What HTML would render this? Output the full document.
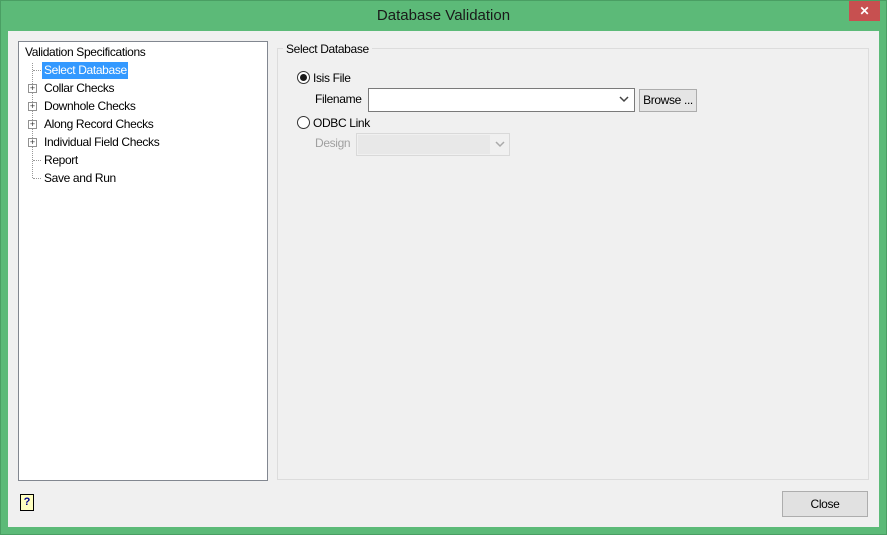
<!DOCTYPE html>
<html><head><style>
*{margin:0;padding:0;box-sizing:border-box}
body{width:887px;height:535px;background:#5cba78;font-family:"Liberation Sans",sans-serif;font-size:12px;color:#000;position:relative;overflow:hidden}
.a{position:absolute}
.t{font-size:12px;white-space:nowrap;letter-spacing:-0.35px}
</style></head><body>
<div class="a" style="left:0;top:0;width:887px;height:535px;border:1px solid #4a9e63"></div>
<div class="a t" style="left:0;width:887px;top:7px;text-align:center;font-size:15px;color:#1a1a1a;letter-spacing:0">Database Validation</div>
<div class="a" style="left:849px;top:1px;width:31px;height:20px;background:#c75050;color:#fff;text-align:center;font-size:12px;font-weight:bold;line-height:20px">✕</div>
<div class="a" style="left:8px;top:31px;width:871px;height:496px;background:#f0f0f0"></div>
<div class="a" style="left:18px;top:41px;width:250px;height:440px;background:#fff;border:1px solid #828790"></div>
<div class="a t" style="left:25px;top:45px">Validation Specifications</div>
<div class="a" style="left:32px;top:63px;height:115px;border-left:1px dotted #999"></div>
<div class="a" style="left:42px;top:62px;width:86px;height:17px;background:#3399ff"></div>
<div class="a t" style="left:44px;top:63px;color:#fff">Select Database</div>
<div class="a t" style="left:44px;top:81px">Collar Checks</div>
<div class="a t" style="left:44px;top:99px">Downhole Checks</div>
<div class="a t" style="left:44px;top:117px">Along Record Checks</div>
<div class="a t" style="left:44px;top:135px">Individual Field Checks</div>
<div class="a t" style="left:44px;top:153px">Report</div>
<div class="a t" style="left:44px;top:171px">Save and Run</div>
<div class="a" style="left:33px;top:70px;width:8px;border-top:1px dotted #999"></div>
<div class="a" style="left:33px;top:160px;width:8px;border-top:1px dotted #999"></div>
<div class="a" style="left:33px;top:178px;width:8px;border-top:1px dotted #999"></div>
<div class="a" style="left:28px;top:84px;width:9px;height:9px;border:1px solid #919191;background:#fff;font-size:9px;line-height:7px;text-align:center;color:#333">+</div>
<div class="a" style="left:28px;top:102px;width:9px;height:9px;border:1px solid #919191;background:#fff;font-size:9px;line-height:7px;text-align:center;color:#333">+</div>
<div class="a" style="left:28px;top:120px;width:9px;height:9px;border:1px solid #919191;background:#fff;font-size:9px;line-height:7px;text-align:center;color:#333">+</div>
<div class="a" style="left:28px;top:138px;width:9px;height:9px;border:1px solid #919191;background:#fff;font-size:9px;line-height:7px;text-align:center;color:#333">+</div>
<div class="a" style="left:277px;top:48px;width:592px;height:432px;border:1px solid #dcdcdc"></div>
<div class="a t" style="left:283px;top:42px;background:#f0f0f0;padding:0 3px">Select Database</div>
<div class="a" style="left:297px;top:71px;width:13px;height:13px;border:1px solid #333;border-radius:50%;background:#fff"></div>
<div class="a" style="left:300px;top:74px;width:7px;height:7px;border-radius:50%;background:#1a1a1a"></div>
<div class="a t" style="left:313px;top:71px">Isis File</div>
<div class="a t" style="left:315px;top:92px">Filename</div>
<div class="a" style="left:368px;top:88px;width:267px;height:24px;border:1px solid #7a7a7a;background:#fff"></div>
<svg class="a" style="left:619px;top:96px" width="10" height="7"><path d="M1 1l4 4 4-4" stroke="#444" stroke-width="1.5" fill="none"/></svg>
<div class="a t" style="left:639px;top:89px;width:58px;height:23px;border:1px solid #acacac;background:#e5e5e5;text-align:center;line-height:21px">Browse ...</div>
<div class="a" style="left:297px;top:116px;width:13px;height:13px;border:1px solid #333;border-radius:50%;background:#fff"></div>
<div class="a t" style="left:313px;top:116px">ODBC Link</div>
<div class="a t" style="left:315px;top:136px;color:#a0a0a0">Design</div>
<div class="a" style="left:356px;top:133px;width:154px;height:23px;border:1px solid #d9d9d9;background:#f0f0f0"></div>
<div class="a" style="left:358px;top:135px;width:132px;height:19px;background:#e8e8e8"></div>
<svg class="a" style="left:495px;top:141px" width="10" height="7"><path d="M1 1l4 4 4-4" stroke="#aaa" stroke-width="1.5" fill="none"/></svg>
<div class="a" style="left:20px;top:494px;width:14px;height:17px;border:1px solid #000;background:#ffffc0;font-size:11px;font-weight:bold;color:#00008b;text-align:center;line-height:14px">?</div>
<div class="a t" style="left:782px;top:491px;width:86px;height:26px;border:1px solid #adadad;background:#e1e1e1;text-align:center;line-height:24px">Close</div>
</body></html>
